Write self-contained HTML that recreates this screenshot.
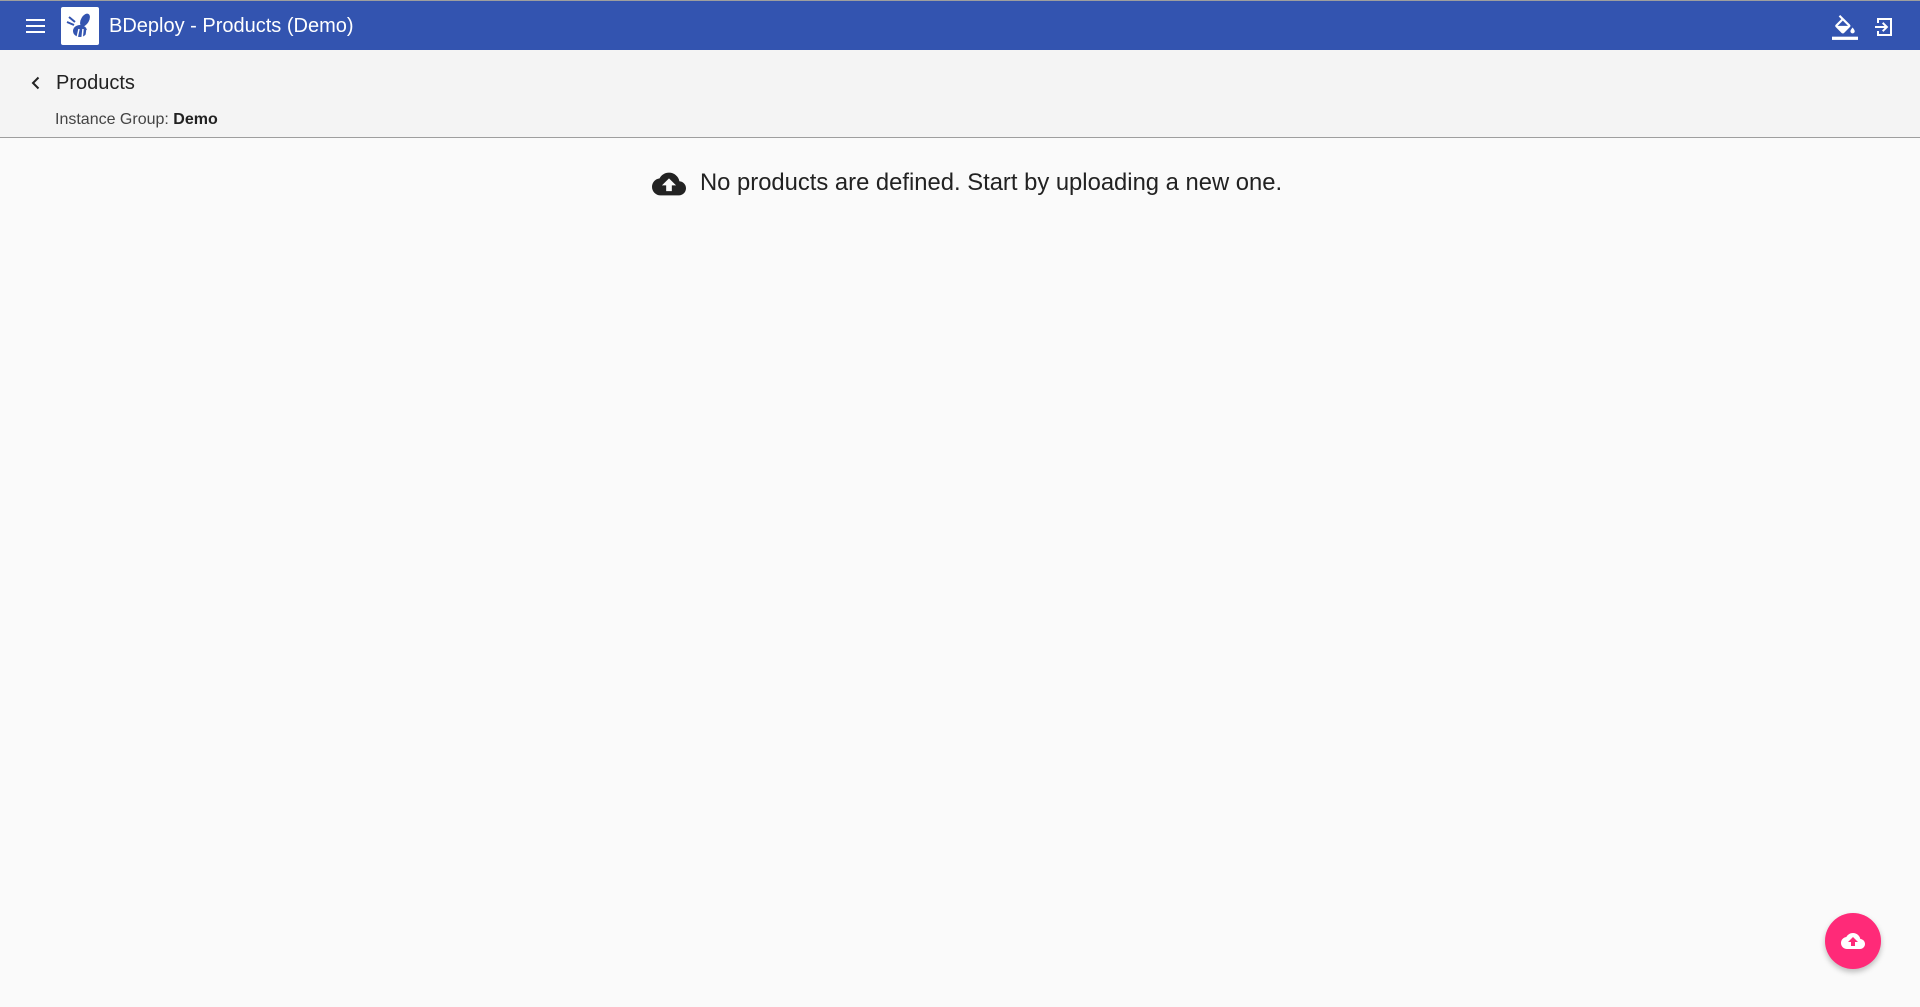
<!DOCTYPE html>
<html><head><meta charset="utf-8"><style>
body{margin:0;width:1920px;height:1007px;background:#fafafa;font-family:"Liberation Sans",sans-serif;overflow:hidden;position:relative}
.top{position:absolute;left:0;top:0;width:1920px;height:1px;background:#9e9e9e}
.bar{position:absolute;left:0;top:1px;width:1920px;height:49px;background:#3354b0;color:#fff}
.hdr{position:absolute;left:0;top:50px;width:1920px;height:87px;background:#f4f4f4;border-bottom:1px solid #9e9e9e}
.abs{position:absolute}
</style></head><body>
<div class="top"></div>
<div class="bar">
 <svg class="abs" style="left:26px;top:18px" width="20" height="14" viewBox="0 0 20 14"><rect y="0" width="19" height="2" fill="#fff"/><rect y="6" width="19" height="2" fill="#fff"/><rect y="12" width="19" height="2" fill="#fff"/></svg>
 <div class="abs" style="left:61px;top:6px;width:38px;height:38px;background:#fff;border-radius:2px">
  <svg width="38" height="38" viewBox="0 0 38 38"><ellipse cx="24" cy="13" rx="4" ry="7" fill="#3354b0" transform="rotate(30 24 13)"/><ellipse cx="19" cy="24" rx="7" ry="6" fill="#3354b0"/><path d="M8 10l6 5M6 15l7 3" stroke="#3354b0" stroke-width="2"/><path d="M18 22l-2 9M22 22l-1 10M26 23l-1 8" stroke="#fff" stroke-width="1.5"/></svg>
 </div>
 <div class="abs" style="left:109px;top:14px;font-size:20px">BDeploy - Products (Demo)</div>
 <svg class="abs" style="left:1832px;top:14px" width="26" height="26" viewBox="0 0 24 24"><path d="M16.6 8.9L7.6 0 6.2 1.4l2.4 2.4-5.2 5.2c-.6.6-.6 1.5 0 2.1l5.5 5.5c.3.3.7.4 1.1.4s.8-.1 1.1-.4l5.5-5.5c.6-.6.6-1.5 0-2.1zM5.2 10L10 5.2 14.8 10H5.2zM19 11.5s-2 2.2-2 3.5c0 1.1.9 2 2 2s2-.9 2-2c0-1.3-2-3.5-2-3.5z" fill="#fff"/><rect x="0" y="20" width="24" height="3" fill="#fff"/></svg>
 <svg class="abs" style="left:1874px;top:16px" width="20" height="20" viewBox="0 0 20 20"><path d="M3 1h15v18H3v-5h2v3h11V3H5v3H3z M1 9h9.5L8 6.5 9.4 5.1 14.3 10l-4.9 4.9L8 13.5 10.5 11H1z" fill="#fff"/></svg>
</div>
<div class="hdr">
 <svg class="abs" style="left:30px;top:26px" width="12" height="14" viewBox="0 0 12 14"><path d="M8.5 1.5L3 7l5.5 5.5" stroke="#222" stroke-width="2" fill="none"/></svg>
 <div class="abs" style="left:56px;top:22px;font-size:20px;color:#222">Products</div>
 <div class="abs" style="left:55px;top:61px;font-size:16px;color:#444">Instance Group: <b style="color:#222">Demo</b></div>
</div>
<svg class="abs" style="left:652px;top:167px" width="34" height="34" viewBox="0 0 24 24"><path d="M19.35 10.04C18.67 6.59 15.64 4 12 4 9.11 4 6.6 5.64 5.35 8.04 2.34 8.36 0 10.91 0 14c0 3.31 2.69 6 6 6h13c2.76 0 5-2.24 5-5 0-2.64-2.05-4.78-4.650-4.96zM14 13v4h-4v-4H7l5-5 5 5h-3z" fill="#222"/></svg>
<div class="abs" style="left:700px;top:169px;font-size:23.8px;color:#222;white-space:nowrap">No products are defined. Start by uploading a new one.</div>
<div class="abs" style="left:1825px;top:913px;width:56px;height:56px;border-radius:50%;background:#ff2a78;box-shadow:0 3px 6px rgba(0,0,0,.25)">
 <svg class="abs" style="left:16px;top:16px" width="24" height="24" viewBox="0 0 24 24"><path d="M19.35 10.04C18.67 6.59 15.64 4 12 4 9.11 4 6.6 5.64 5.35 8.04 2.34 8.36 0 10.91 0 14c0 3.31 2.69 6 6 6h13c2.76 0 5-2.24 5-5 0-2.64-2.05-4.78-4.65-4.96zM14 13v4h-4v-4H7l5-5 5 5h-3z" fill="#fff"/></svg>
</div>
</body></html>
